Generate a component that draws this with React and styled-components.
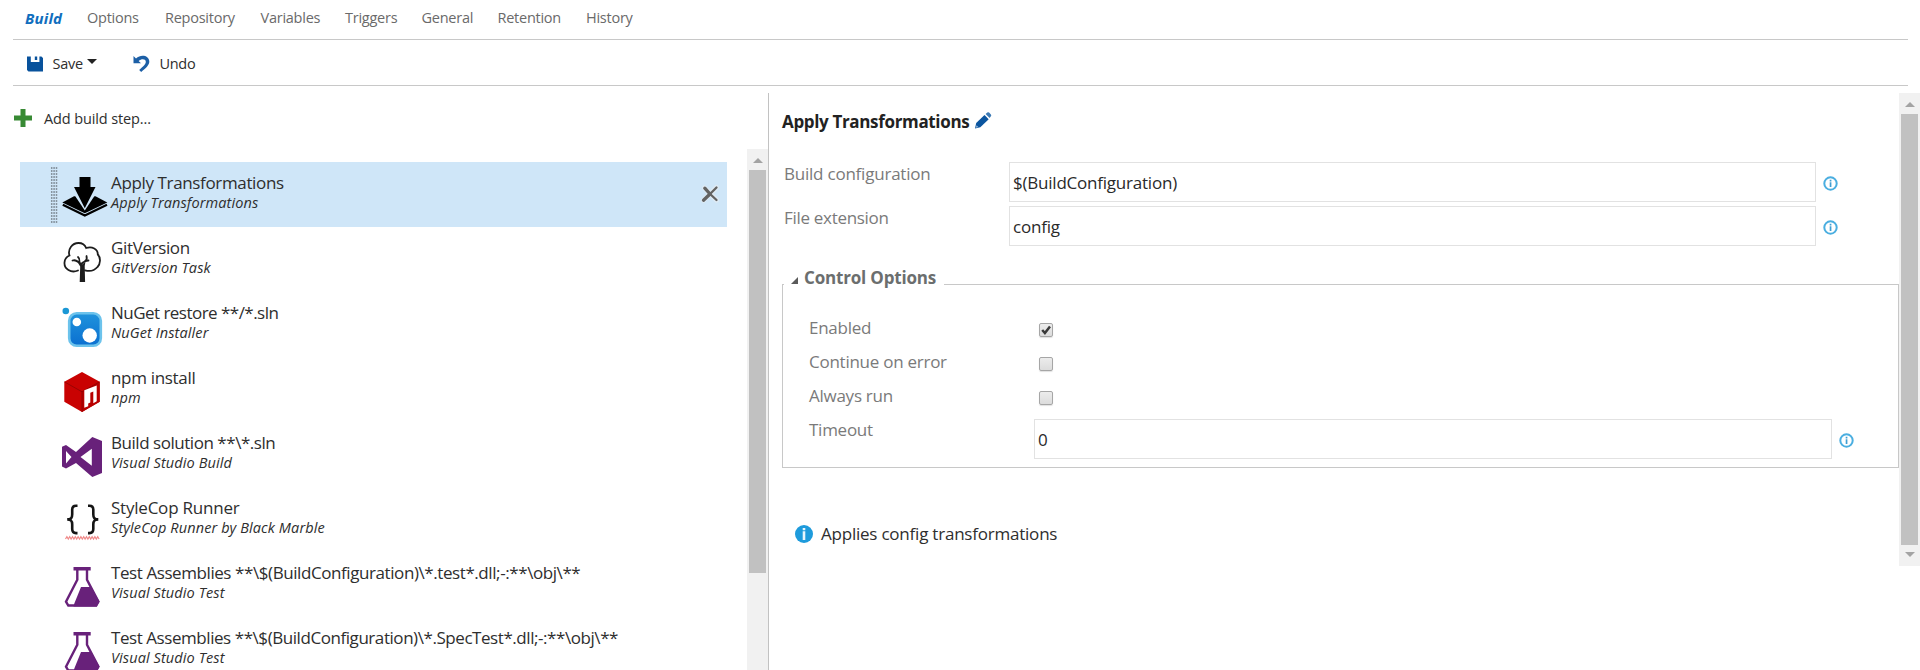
import React from 'react';
import styled, { createGlobalStyle } from 'styled-components';

const GlobalStyle = createGlobalStyle`
  * { box-sizing: border-box; }
  body {
    margin: 0;
    background: #fff;
    color: #2e2e2e;
    font: 17px "Open Sans", "Noto Sans", sans-serif;
    overflow: hidden;
  }
  svg { display: block; flex: none; overflow: visible; }
`;

const Page = styled.div`
  height: 670px;
  display: flex;
  flex-direction: column;
  overflow: hidden;
`;

const TabBar = styled.nav`
  flex: none;
  display: flex;
  height: 40px;
  margin: 0 12px 0 13px;
  padding-left: 12px;
  border-bottom: 1px solid #c8c8c8;
  line-height: 36px;
  font-size: 14.5px;
  letter-spacing: -0.25px;
`;

const Tab = styled.a`
  width: ${(p) => p.$width}px;
  color: ${(p) => (p.$active ? '#106ebe' : '#6a6a6a')};
  white-space: nowrap;
  ${(p) => p.$active && 'font-weight: 700; font-style: italic; font-size: 15px; letter-spacing: 0.2px;'}
`;

const Toolbar = styled.div`
  flex: none;
  display: flex;
  align-items: center;
  height: 46px;
  margin: 0 12px 0 13px;
  padding: 2px 0 0 14px;
  border-bottom: 1px solid #c8c8c8;
  font-size: 14.5px;
  letter-spacing: -0.25px;
`;

const ToolButton = styled.button`
  display: flex;
  align-items: center;
  gap: ${(p) => p.$gap}px;
  margin-right: ${(p) => p.$after || 0}px;
  padding: 0;
  border: 0;
  background: none;
  color: inherit;
  font: inherit;
  letter-spacing: inherit;
  line-height: 20px;
`;

const Caret = styled.span`
  margin: -4px 0 0 -5px;
  border: 5px solid transparent;
  border-top-color: #222;
  border-bottom: 0;
`;

const Main = styled.main`
  flex: 1;
  min-height: 0;
  display: flex;
  margin-top: 7px;
`;

const StepsPane = styled.section`
  width: 768px;
  display: flex;
  flex-direction: column;
`;

const AddStep = styled.button`
  flex: none;
  display: flex;
  align-items: center;
  gap: 12px;
  height: 51px;
  margin-bottom: 5px;
  padding: 0 0 0 14px;
  border: 0;
  background: none;
  color: inherit;
  font: inherit;
  font-size: 14.5px;
  letter-spacing: -0.12px;
  svg { margin-top: -2px; }
`;

const ListArea = styled.div`
  flex: 1;
  min-height: 0;
  display: flex;
`;

const StepList = styled.ul`
  flex: 1;
  margin: 0;
  padding: 13px 20px 0 20px;
  overflow: hidden;
  list-style: none;
`;

const StepItem = styled.li`
  display: flex;
  height: 65px;
  background: ${(p) => (p.$selected ? '#cfe6f8' : 'transparent')};
`;

const GripCell = styled.div`
  width: 42px;
  padding: 5px 0 0 31px;
`;

const IconCell = styled.div`
  width: 49px;
  padding-top: 15px;
`;

const StepText = styled.div`
  flex: 1;
  padding-top: 11px;
  white-space: nowrap;
`;

const StepTitle = styled.div`
  line-height: 20px;
  letter-spacing: ${(p) => p.$track}px;
`;

const StepKind = styled.div`
  font-size: 14.5px;
  font-style: italic;
  line-height: 19px;
  letter-spacing: 0.1px;
`;

const RemoveCell = styled.div`
  padding: 23px 8px 0 0;
`;

const ScrollTrack = styled.div`
  flex: none;
  display: flex;
  flex-direction: column;
  align-items: center;
  width: 21px;
  height: ${(p) => p.$height || 'auto'};
  background: #f1f1f1;
`;

const ScrollThumb = styled.div`
  width: 17px;
  height: ${(p) => p.$length}px;
  background: #c1c1c1;
`;

const ScrollButton = styled.div`
  display: flex;
  justify-content: center;
  align-items: center;
  height: 21px;
  padding-top: 2px;
  &::before {
    content: '';
    border: 5px solid transparent;
    ${(p) => (p.$down
      ? 'border-top-color: #a3a3a3; border-bottom: 0; margin-top: -4px;'
      : 'border-bottom-color: #a3a3a3; border-top: 0;')}
  }
`;

const DetailPane = styled.section`
  flex: 1;
  display: flex;
  border-left: 1px solid #c2c2c2;
`;

const Detail = styled.div`
  flex: 1;
  padding: 17px 0 0 13px;
`;

const Heading = styled.h2`
  display: flex;
  gap: 5px;
  height: 52px;
  margin: 0;
  font-size: 17px;
  font-weight: 700;
  line-height: 24px;
  letter-spacing: -0.34px;
  color: #222;
  svg { margin-top: 2px; }
`;

const Field = styled.div`
  display: flex;
  margin-bottom: 4px;
  padding-left: 2px;
`;

const FieldLabel = styled.label`
  width: 225px;
  line-height: 23px;
  letter-spacing: ${(p) => p.$track}px;
  color: #7a7a7a;
`;

const TextBox = styled.input`
  width: ${(p) => p.$width}px;
  height: 40px;
  padding: 0 3px;
  border: 1px solid #e2e2e2;
  outline: 0;
  background: #fff;
  color: #2a2a2a;
  font: inherit;
  letter-spacing: -0.22px;
`;

const HintCell = styled.span`
  padding: 14px 0 0 7px;
`;

const Group = styled.div`
  height: 184px;
  margin-top: 38px;
  border: 1px solid #c8c8c8;
`;

const GroupTitle = styled.div`
  display: flex;
  align-items: center;
  gap: 6px;
  width: 160px;
  height: 23px;
  margin: -19px 0 22px 1px;
  padding-left: 7px;
  background: #fff;
  font-weight: 700;
  letter-spacing: -0.18px;
  color: #6b6e6e;
  svg { margin-top: 6px; }
`;

const OptionRow = styled.div`
  display: flex;
  height: ${(p) => (p.$tall ? 46 : 34)}px;
  padding-left: 26px;
`;

const OptionLabel = styled.label`
  width: 225px;
  line-height: 34px;
  letter-spacing: -0.26px;
  color: #7a7a7a;
`;

const OptionField = styled.div`
  display: flex;
  padding-top: 6px;
`;

const CheckBox = styled.span`
  width: 14px;
  height: 14px;
  margin: 12px 0 0 5px;
  border: 1px solid #a6a6a6;
  border-radius: 2px;
  background: linear-gradient(#ececec, #dcdcdc);
  box-shadow: 0 1px 1px rgba(0, 0, 0, 0.12);
`;

const Note = styled.p`
  display: flex;
  align-items: center;
  gap: 8px;
  margin: 54px 0 0 13px;
  line-height: 24px;
  letter-spacing: -0.22px;
`;

const SaveIcon = () => (
  <svg width="16" height="16" viewBox="0 0 16 16">
    <path fill="#08529c" d="M0 .5h3.800v5.500h8.600V.5h2L16 2v13.500H1.500L0 14z" />
    <path fill="#08529c" d="M7.800.5h2.400v3.500H7.800z" />
  </svg>
);

const UndoIcon = () => (
  <svg width="17" height="17" viewBox="0 0 17 17">
    <path fill="#1c5fa6" d="M0.500 1v7.200h7.500L5.600 5.900C8.500 3.600 12.600 3.700 12.800 6.700c.2 2.300-2.800 4.800-6.600 8.300l2 2c4.500-4 8.300-6.800 8.100-10.800C16 0.500 8-1.300 3 3.400z" />
  </svg>
);

const PlusIcon = () => (
  <svg width="18" height="18" viewBox="0 0 18 18">
    <path fill="#388a34" d="M6.500 0h5v6.500H18v5h-6.500V18h-5v-6.500H0v-5h6.500z" />
  </svg>
);

const PencilIcon = () => (
  <svg width="18" height="17" viewBox="0 0 18 17">
    <path fill="#0b559f" d="M1 16.500l1.200-5.500L10.500 3l4.200 4.200L6.300 15.300z" />
    <path fill="#3c7ab5" d="M11.600 2L13.300.5q.9-.7 1.800.1l1.800 1.800q.8.9 0 1.800L15.600 6z" />
    <path fill="#fff" d="M1.800 15.800l.8-2.600 1.700 1.800z" opacity=".6" />
  </svg>
);

const RemoveIcon = () => (
  <svg width="18" height="18" viewBox="0 0 18 18">
    <g fill="none" strokeLinecap="round">
      <path stroke="#e9edf0" strokeWidth="5" d="M2.500 15.200L15.500 2.500M3.500 3l12 12" opacity=".6" />
      <path stroke="#636363" strokeWidth="3.300" d="M2.500 15.200L9 9M3.800 3.200L9 9" />
      <path stroke="#636363" strokeWidth="2.300" d="M8 10l7.500-7.500M8 8l7.500 7" />
    </g>
  </svg>
);

const Grip = () => (
  <svg width="7" height="56" viewBox="0 0 7 56">
    {[0, 2.4, 4.8].map((x) => (
      <path key={x} d={`M${x + 0.7} 0v56`} stroke="#8795a0" strokeWidth="1.500" strokeDasharray="2 1" />
    ))}
  </svg>
);

const InfoOutline = () => (
  <svg width="15" height="15" viewBox="0 0 15 15">
    <circle cx="7.500" cy="7.500" r="6.200" fill="#fff" stroke="#4aaee0" strokeWidth="2" />
    <path fill="#3f9ed2" d="M6.700 3.700h1.700v1.700H6.700zM6.700 6.300h1.700v4.700H6.700z" />
  </svg>
);

const InfoSolid = () => (
  <svg width="18" height="18" viewBox="0 0 18 18">
    <circle cx="9" cy="9" r="9" fill="#1e9bdc" />
    <path fill="#e8f6fd" d="M7.700 3h2.600v2.200H7.700zM7.700 6.200h2.600V15H7.700z" />
  </svg>
);

const Expander = () => (
  <svg width="7" height="7" viewBox="0 0 7 7">
    <path fill="#5a5a5a" d="M7 0v7H0z" />
  </svg>
);

const Tick = () => (
  <svg width="12" height="12" viewBox="0 0 12 12">
    <path d="M2.200 6l2.700 3L10 2.500" fill="none" stroke="#3a3a3a" strokeWidth="2.500" />
  </svg>
);

const DeployIcon = () => (
  <svg width="45" height="41" viewBox="0 0 45 41">
    <path d="M0.300 25.500L12 19.300h21.500L45.300 25.500 22.800 36.300z" fill="#000" />
    <path d="M0.800 27.800L22.800 38.600 45 27.800" fill="none" stroke="#000" strokeWidth="2.200" />
    <path d="M12.800 18.500L22.800 33.500 32.800 18.500 32.800 15h-20z" fill="#cfe6f8" />
    <path d="M17.500 0h11v10H33.500L22.800 31.200 12 10h5.500z" fill="#000" />
  </svg>
);

const TreeIcon = () => (
  <svg width="40" height="40" viewBox="0 0 40 40">
    <g fill="none" stroke="#1d1d1d" strokeWidth="1.800" strokeLinecap="round">
      <path d="M16 28.500C9 31.500 2 27 2.500 20.500 2.800 16.500 5 14.500 7.500 13.500 5.500 7.500 10 1 16.500 1c4 0 6.500 2 7.700 5C30 4 36 7 35.800 12.500 39 15.500 38.500 22 35.500 25c-3.500 4-8.500 4.500-12.500 3.300" />
      <path d="M10.500 18.500c3-1 5 .5 9 3.500 1-2 5-3.500 7-3.500M17.500 19.500c.3-2-.2-3.500-1.500-4.500M23 19c2-1 2-3 1.500-5" />
    </g>
    <path fill="#1d1d1d" d="M14.500 18.500l5.300 4.300 3.700-3.300-.8 4.500.4 16h-5.400l.5-15.500z" />
  </svg>
);

const NuGetIcon = () => (
  <svg width="40" height="40" viewBox="0 0 40 40">
    <defs>
      <linearGradient id="nuget" x2="0" y2="1">
        <stop stopColor="#1f93dc" />
        <stop offset="1" stopColor="#0b6fd0" />
      </linearGradient>
    </defs>
    <circle cx="3.800" cy="4" r="3.300" fill="#1a97d5" />
    <rect x="7.200" y="6.300" width="31.600" height="32.500" rx="7.500" fill="url(#nuget)" stroke="#6cc3ec" strokeWidth="2.600" />
    <circle cx="14.800" cy="15" r="4.300" fill="#fff" />
    <circle cx="27.700" cy="28.500" r="7.200" fill="#fff" />
  </svg>
);

const NpmIcon = () => (
  <svg width="40" height="40" viewBox="0 0 40 40">
    <path fill="#c90202" d="M20 0l17.700 9.800v20L20 40 2.300 29.800v-20z" />
    <path fill="#b80000" d="M20 19.800l17.700-10v20L20 40z" />
    <path d="M2.500 9.900L20 19.800 37.500 9.900M20 19.800V40" fill="none" stroke="#8e0303" strokeWidth=".8" />
    <path fill="#fff" d="M22.300 18.300l12.400-4.800v15.800l-3.400 2V19.500l-3 1.300v9.700l-2.100 1v2.700l-3.900 1.500z" />
  </svg>
);

const VisualStudioIcon = () => (
  <svg width="40" height="40" viewBox="0 0 40 40">
    <path
      fill="#68217a"
      fillRule="evenodd"
      d="M0 9.800L4 8l10 7L30.300 0 40 4v32l-9.700 4L14 26 4 31.500l-4-2zM4 14v12.500L9.500 20zM29.800 11.800L18.500 20l11.300 8.800z"
    />
  </svg>
);

const BracesIcon = () => (
  <svg width="40" height="40" viewBox="0 0 40 40">
    <g fill="none" stroke="#151515" strokeWidth="2.600">
      <path d="M15.500 3.700h-1.500c-3 0-3.800 1.300-3.800 4v4.500c0 3.500-1 5.200-5 5.200 4 0 5 1.700 5 5.200v4.500c0 2.700.8 4 3.800 4h1.500" />
      <path d="M26 3.700h1.500c3 0 3.800 1.300 3.800 4v4.500c0 3.500 1 5.200 5 5.200-4 0-5 1.700-5 5.200v4.500c0 2.700-.8 4-3.800 4H26" />
    </g>
    <path
      d={`M3.500 37${'l1.400-2.400 1.400 2.400'.repeat(12)}`}
      fill="none"
      stroke="#f08a8a"
      strokeWidth="1.200"
    />
  </svg>
);

const FlaskIcon = () => (
  <svg width="40" height="40" viewBox="0 0 40 40">
    <path fill="#68217a" d="M11.500 0h17.200v3.500H11.500z" />
    <path
      d="M15.300 3v9.800L4 34.600 6.300 38.500h27.900l2.200-3.900L25 12.800V3"
      fill="none"
      stroke="#68217a"
      strokeWidth="2.400"
    />
    <path fill="#68217a" d="M19 20h10l8.500 14.800-2.800 4.700H11.500l1-3.500z" />
  </svg>
);

const TABS = [
  ['Build', 62],
  ['Options', 78],
  ['Repository', 95.5],
  ['Variables', 84.5],
  ['Triggers', 76.5],
  ['General', 76],
  ['Retention', 88.5],
  ['History', 60],
];

const STEPS = [
  { title: 'Apply Transformations', kind: 'Apply Transformations', icon: DeployIcon, track: -0.36 },
  { title: 'GitVersion', kind: 'GitVersion Task', icon: TreeIcon, track: -0.36 },
  { title: 'NuGet restore **/*.sln', kind: 'NuGet Installer', icon: NuGetIcon, track: -0.53 },
  { title: 'npm install', kind: 'npm', icon: NpmIcon, track: -0.32 },
  { title: 'Build solution **\\*.sln', kind: 'Visual Studio Build', icon: VisualStudioIcon, track: -0.46 },
  { title: 'StyleCop Runner', kind: 'StyleCop Runner by Black Marble', icon: BracesIcon, track: -0.22 },
  { title: 'Test Assemblies **\\$(BuildConfiguration)\\*.test*.dll;-:**\\obj\\**', kind: 'Visual Studio Test', icon: FlaskIcon, track: -0.42 },
  { title: 'Test Assemblies **\\$(BuildConfiguration)\\*.SpecTest*.dll;-:**\\obj\\**', kind: 'Visual Studio Test', icon: FlaskIcon, track: -0.44 },
];

const OPTIONS = [
  ['Enabled', true],
  ['Continue on error', false],
  ['Always run', false],
];

function Step({ step, selected }) {
  const Icon = step.icon;
  return (
    <StepItem $selected={selected}>
      <GripCell>{selected && <Grip />}</GripCell>
      <IconCell><Icon /></IconCell>
      <StepText>
        <StepTitle $track={step.track}>{step.title}</StepTitle>
        <StepKind>{step.kind}</StepKind>
      </StepText>
      {selected && <RemoveCell><RemoveIcon /></RemoveCell>}
    </StepItem>
  );
}

export default function App() {
  return (
    <Page>
      <GlobalStyle />
      <TabBar>
        {TABS.map(([name, width], i) => (
          <Tab key={name} $width={width} $active={i === 0}>{name}</Tab>
        ))}
      </TabBar>
      <Toolbar>
        <ToolButton $gap={9.5} $after={36}><SaveIcon />Save<Caret /></ToolButton>
        <ToolButton $gap={9}><UndoIcon />Undo</ToolButton>
      </Toolbar>
      <Main>
        <StepsPane>
          <AddStep><PlusIcon />Add build step...</AddStep>
          <ListArea>
            <StepList>
              {STEPS.map((step, i) => <Step key={step.title} step={step} selected={i === 0} />)}
            </StepList>
            <ScrollTrack>
              <ScrollButton />
              <ScrollThumb $length={403} />
            </ScrollTrack>
          </ListArea>
        </StepsPane>
        <DetailPane>
          <Detail>
            <Heading>Apply Transformations<PencilIcon /></Heading>
            <Field>
              <FieldLabel $track={-0.22}>Build configuration</FieldLabel>
              <TextBox $width={807} defaultValue="$(BuildConfiguration)" />
              <HintCell><InfoOutline /></HintCell>
            </Field>
            <Field>
              <FieldLabel $track={-0.3}>File extension</FieldLabel>
              <TextBox $width={807} defaultValue="config" />
              <HintCell><InfoOutline /></HintCell>
            </Field>
            <Group>
              <GroupTitle><Expander />Control Options</GroupTitle>
              {OPTIONS.map(([name, on]) => (
                <OptionRow key={name}>
                  <OptionLabel>{name}</OptionLabel>
                  <CheckBox>{on && <Tick />}</CheckBox>
                </OptionRow>
              ))}
              <OptionRow $tall>
                <OptionLabel>Timeout</OptionLabel>
                <OptionField>
                  <TextBox $width={798} defaultValue="0" />
                  <HintCell><InfoOutline /></HintCell>
                </OptionField>
              </OptionRow>
            </Group>
            <Note><InfoSolid />Applies config transformations</Note>
          </Detail>
          <ScrollTrack $height="473px">
            <ScrollButton />
            <ScrollThumb $length={431} />
            <ScrollButton $down />
          </ScrollTrack>
        </DetailPane>
      </Main>
    </Page>
  );
}
